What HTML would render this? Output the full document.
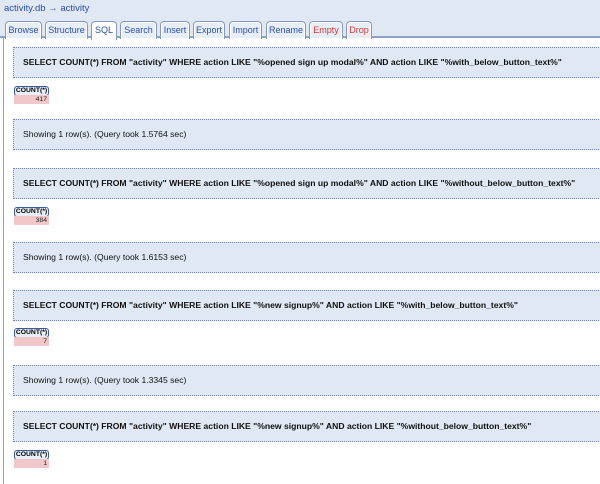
<!DOCTYPE html>
<html><head><style>
*{margin:0;padding:0;box-sizing:border-box}
body{width:600px;height:484px;overflow:hidden;background:#fff;font-family:"Liberation Sans",Arial,sans-serif;position:relative}
#hdr{position:absolute;left:0;top:0;width:600px;height:38px;background:#e0e8f3;border-bottom:2px solid #8da3c9}
#title{position:absolute;left:4px;top:3px;font-size:9.5px;color:#2a4fa8}
.tab{position:absolute;top:21px;height:18px;border:1px solid #8898bb;border-bottom:none;border-radius:4px 4px 0 0;background:#e8eef7;box-shadow:inset 0 0 0 1px #fff;font-size:9px;color:#2a4fa8;text-align:center;line-height:16px}
.tab.act{background:#fff;height:19px}
.tab.red{color:#d23a3a}
#side{position:absolute;left:3px;top:38px;width:1px;height:446px;background:#8da3c9}
.box{position:absolute;left:13px;width:600px;height:31px;background:#e0e8f3;border:1px dotted #6c84b3;border-right:none;font-size:8.6px;line-height:29px;padding-left:9px;color:#111}
.box.b{font-weight:bold}
.ch{position:absolute;left:14px;width:35px;height:10px;border:1px solid #3a5aa0;border-radius:3px;background:#e8eef7;font-size:6.8px;font-weight:bold;line-height:8px;text-align:center;color:#000}
.cv{position:absolute;left:14px;width:35px;height:9px;background:#f2c7c9;font-size:6.8px;line-height:9px;text-align:right;padding-right:2px;color:#222}
</style></head><body>
<div id="hdr"><div id="title">activity.db → activity</div>
<div class="tab" style="left:5px;width:37px">Browse</div>
<div class="tab" style="left:45px;width:43px">Structure</div>
<div class="tab act" style="left:91px;width:26px">SQL</div>
<div class="tab" style="left:120px;width:37px">Search</div>
<div class="tab" style="left:160px;width:30px">Insert</div>
<div class="tab" style="left:193px;width:32px">Export</div>
<div class="tab" style="left:229px;width:33px">Import</div>
<div class="tab" style="left:266px;width:40px">Rename</div>
<div class="tab red" style="left:309px;width:34px">Empty</div>
<div class="tab red" style="left:346px;width:26px">Drop</div>
</div>
<div id="side"></div>

<div class="box b" style="top:47px">SELECT COUNT(*) FROM "activity" WHERE action LIKE "%opened sign up modal%" AND action LIKE "%with_below_button_text%"</div>
<div class="ch" style="top:86px">COUNT(*)</div><div class="cv" style="top:95px">417</div>
<div class="box" style="top:119px">Showing 1 row(s). (Query took 1.5764 sec)</div>

<div class="box b" style="top:168px">SELECT COUNT(*) FROM "activity" WHERE action LIKE "%opened sign up modal%" AND action LIKE "%without_below_button_text%"</div>
<div class="ch" style="top:207px">COUNT(*)</div><div class="cv" style="top:216px">384</div>
<div class="box" style="top:242px">Showing 1 row(s). (Query took 1.6153 sec)</div>

<div class="box b" style="top:290px">SELECT COUNT(*) FROM "activity" WHERE action LIKE "%new signup%" AND action LIKE "%with_below_button_text%"</div>
<div class="ch" style="top:328px">COUNT(*)</div><div class="cv" style="top:337px">7</div>
<div class="box" style="top:365px">Showing 1 row(s). (Query took 1.3345 sec)</div>

<div class="box b" style="top:411px">SELECT COUNT(*) FROM "activity" WHERE action LIKE "%new signup%" AND action LIKE "%without_below_button_text%"</div>
<div class="ch" style="top:450px">COUNT(*)</div><div class="cv" style="top:459px">1</div>
</body></html>
